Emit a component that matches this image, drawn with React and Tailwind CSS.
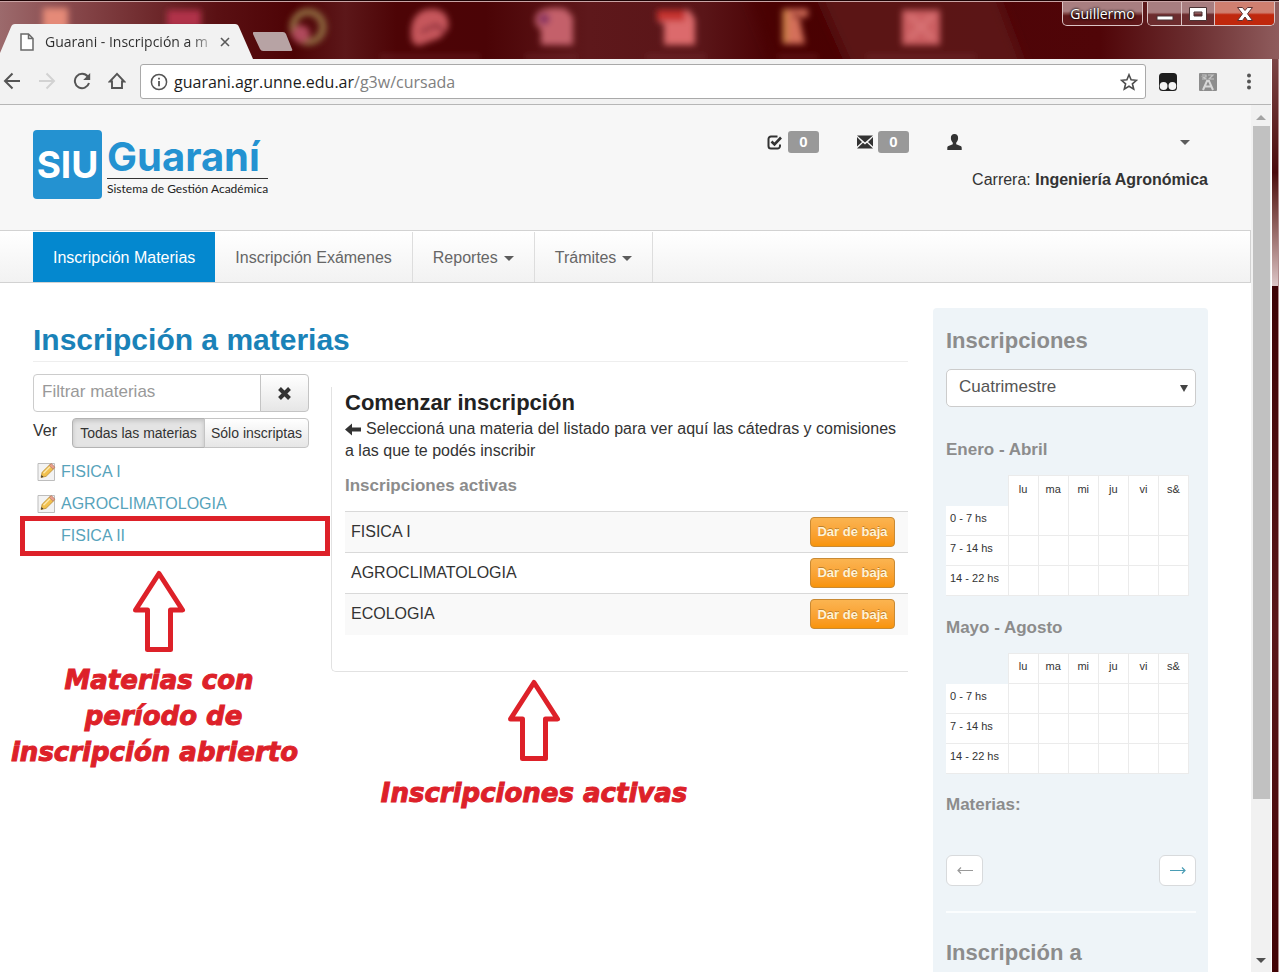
import React from "react";

const subjects = [
  { name: "FISICA I", enrolled: true },
  { name: "AGROCLIMATOLOGIA", enrolled: true },
  { name: "FISICA II", enrolled: false, highlighted: true },
];
const active = ["FISICA I", "AGROCLIMATOLOGIA", "ECOLOGIA"];
const days = ["lu", "ma", "mi", "ju", "vi", "s&"];
const slots = ["0 - 7 hs", "7 - 14 hs", "14 - 22 hs"];

function DesktopBackdrop() {
  return (
    <svg className="absolute inset-0 h-full w-full" viewBox="0 0 1279 59" preserveAspectRatio="none" aria-hidden="true">
      <defs>
        <linearGradient id="wall" x1="0" x2="1" y1="0" y2="0">
          <stop offset="0" stopColor="#9c6a6c" />
          <stop offset="0.05" stopColor="#8a4b4e" />
          <stop offset="0.17" stopColor="#5a1013" />
          <stop offset="0.23" stopColor="#4d0305" />
          <stop offset="0.27" stopColor="#5c1719" />
          <stop offset="0.31" stopColor="#4d0406" />
          <stop offset="0.38" stopColor="#4b0406" />
          <stop offset="0.46" stopColor="#5e181b" />
          <stop offset="0.55" stopColor="#5a1518" />
          <stop offset="0.6" stopColor="#4b0305" />
          <stop offset="0.86" stopColor="#500508" />
          <stop offset="0.93" stopColor="#6a2c2e" />
          <stop offset="1" stopColor="#8f5c5d" />
        </linearGradient>
        <filter id="soft" x="-30%" y="-30%" width="160%" height="160%">
          <feGaussianBlur stdDeviation="3" />
        </filter>
        <filter id="wide" x="-30%" y="-30%" width="160%" height="160%">
          <feGaussianBlur stdDeviation="6" />
        </filter>
      </defs>
      <rect width="1279" height="59" fill="url(#wall)" />
      <g filter="url(#wide)">
        <path d="M815 -10h180l30 79H850z" fill="#5e1a1d" opacity="0.8" />
        <path d="M745 -10h72l35 79h-75z" fill="#490203" opacity="0.6" />
      </g>
      <g filter="url(#soft)">
        <rect x="43" y="8" width="25" height="22" fill="#e58a78" />
        <rect x="167" y="10" width="34" height="18" fill="#b0324a" />
        <circle cx="308" cy="27" r="15" fill="none" stroke="#8f6a40" strokeWidth="7" />
        <circle cx="301" cy="34" r="9" fill="#b04a5c" />
        <path d="M412 42c-4-20 4-33 20-33 13 0 18 9 16 20l-8 9-22 8z" fill="#c6565c" />
        <path d="M421 32l15-7 8 6" fill="none" stroke="#7c2030" strokeWidth="3" />
        <path d="M541 45V29c-8-3-8-16 1-19 8-3 18-2 24-1l7 8v28z" fill="#c4606a" />
        <circle cx="544" cy="19" r="6" fill="#8b3460" />
        <path d="M664 45V23h-5V10h30l6 9v26z" fill="#dc6b6c" />
        <rect x="657" y="10" width="28" height="11" fill="#c5302f" />
        <path d="M783 44V9h25v8h-9l6 27z" fill="#d4705a" />
        <path d="M785 9v34" stroke="#c98242" strokeWidth="5" />
        <path d="M793 15l10 3" stroke="#7b1c1a" strokeWidth="4" />
        <rect x="902" y="10" width="38" height="35" fill="#cc5e62" />
        <path d="M909 15l24 24m0-24l-24 24" stroke="#d97476" strokeWidth="4" />
        <path d="M380 57h100M525 57h52M646 57h60M778 57h40M866 57h110" stroke="#8a4446" strokeWidth="2" opacity="0.7" />
      </g>
      <path d="M0 .5h1279" stroke="#1d0304" />
      <path d="M0 1.5h1279" stroke="#c9a3a4" />
    </svg>
  );
}

function TitleBar() {
  return (
    <div className="relative flex h-[59px] shrink-0 items-end overflow-hidden font-['Open_Sans',sans-serif]">
      <DesktopBackdrop />
      <div className="relative flex h-[35px] w-[253px] items-center">
        <svg className="absolute inset-0 h-full w-full" viewBox="0 0 253 35" aria-hidden="true">
          <path d="M0 29 11 3q1-3 4-3h220q3 0 4 3l14 32H0z" fill="#f2f2f2" />
        </svg>
        <svg className="relative ml-5 h-[18px] w-[14px] shrink-0" viewBox="0 0 14 18" aria-hidden="true">
          <path d="M1 1h7.500l4.500 4.500V17H1zM8.500 1v4.500H13" fill="#fff" stroke="#6a6a6a" strokeWidth="1.500" />
        </svg>
        <span className="relative ml-[11px] w-[172px] bg-linear-to-r from-[#2d2d2d] from-85% to-transparent bg-clip-text text-sm whitespace-nowrap text-transparent">
          Guarani - Inscripción a m
        </span>
        <button type="button" aria-label="Cerrar pestaña" className="relative flex size-4 items-center justify-center">
          <svg className="size-[10px]" viewBox="0 0 10 10" aria-hidden="true">
            <path d="M1 1l8 8m0-8L1 9" stroke="#5a5a5a" strokeWidth="1.600" />
          </svg>
        </button>
      </div>
      <button type="button" aria-label="Nueva pestaña" className="relative h-[27px] w-[40px]">
        <svg className="h-[27px] w-[40px]" viewBox="0 0 40 27" aria-hidden="true">
          <path d="M1 0h29q2 0 3 2l6 15q1 2-1 2H10q-2 0-3-2L0 2q-1-2 1-2z" fill="#b7a3a4" />
        </svg>
      </button>
      <div className="relative ml-auto flex gap-1 self-start pt-[2px] pr-1">
        <button type="button" className="h-6 w-[81px] rounded-b-[5px] border border-t-0 border-[#dcc4c5] bg-linear-to-b from-[#a87e80] from-40% to-[#5e1719] to-60% text-sm leading-5 text-white [text-shadow:0_0_3px_#000,0_0_2px_#000]">
          Guillermo
        </button>
        <div className="flex h-6 w-[128px] overflow-hidden rounded-b-[5px] border border-t-0 border-[#dcc4c5]">
          <button type="button" aria-label="Minimizar" className="flex w-[34px] items-center justify-center border-r border-[#dcc4c5] bg-linear-to-b from-[#a87e80] from-45% to-[#6c2c2e] to-55%">
            <svg className="h-5 w-5" viewBox="0 0 20 20" aria-hidden="true"><rect x="2" y="12" width="16" height="4" fill="#fff" stroke="#4a3334" /></svg>
          </button>
          <button type="button" aria-label="Maximizar" className="flex w-[33px] items-center justify-center border-r border-[#dcc4c5] bg-linear-to-b from-[#a87e80] from-45% to-[#6c2c2e] to-55%">
            <svg className="h-5 w-5" viewBox="0 0 20 20" aria-hidden="true"><path fillRule="evenodd" d="M1.500 3.500h17v13h-17zm4.500 4.500v4h8V8z" fill="#fff" stroke="#4a3334" /></svg>
          </button>
          <button type="button" aria-label="Cerrar" className="flex flex-1 items-center justify-center bg-linear-to-b from-[#cf7f70] from-45% to-[#c0280d] to-55%">
            <svg className="h-5 w-5" viewBox="0 0 20 20" aria-hidden="true"><path d="M2.500 3.500h5l2.500 3 2.500-3h5l-5 6.300 5 6.700h-5L10 13l-2.500 3.500h-5l5-6.700z" fill="#fff" stroke="#5c3030" /></svg>
          </button>
        </div>
      </div>
    </div>
  );
}

function Toolbar() {
  return (
    <div className="flex h-[46px] shrink-0 items-center border-b border-[#b6b6b6] bg-[#f2f2f2] pr-[13px]">
      <div className="flex items-center gap-[17px] pb-[2px] pl-[3px]">
        <button type="button" aria-label="Atrás">
          <svg className="size-[18px]" viewBox="0 0 18 18" aria-hidden="true"><path d="M17 9H2m7.500-7.500L2 9l7.500 7.500" fill="none" stroke="#555" strokeWidth="2" /></svg>
        </button>
        <button type="button" aria-label="Adelante">
          <svg className="size-[18px]" viewBox="0 0 18 18" aria-hidden="true"><path d="M1 9h15M8.500 1.500 16 9l-7.500 7.500" fill="none" stroke="#d2d2d2" strokeWidth="2" /></svg>
        </button>
        <button type="button" aria-label="Recargar">
          <svg className="size-[18px]" viewBox="0 0 18 18" aria-hidden="true">
            <path d="M14.800 4.600A7.200 7.200 0 1 0 16 11" fill="none" stroke="#555" strokeWidth="2" />
            <path d="M17.200 1v7H10.200z" fill="#555" />
          </svg>
        </button>
        <button type="button" aria-label="Inicio">
          <svg className="size-[18px]" viewBox="0 0 18 18" aria-hidden="true"><path d="M9 1.800 1.800 9.500H4V16h10V9.500h2.200z" fill="none" stroke="#555" strokeWidth="1.900" /></svg>
        </button>
      </div>
      <div className="ml-[14px] flex h-[35px] flex-1 items-center rounded-[3px] border border-[#a9a9a9] bg-white px-[9px]">
        <svg className="size-[18px] shrink-0" viewBox="0 0 18 18" aria-hidden="true">
          <circle cx="9" cy="9" r="7.600" fill="none" stroke="#555" strokeWidth="1.500" />
          <path d="M9 8v5.200M9 4.700v1.800" stroke="#555" strokeWidth="1.800" />
        </svg>
        <a href="#cursada" className="ml-[6px] font-['Open_Sans',sans-serif] text-base text-[#1c1c1c]">
          guarani.agr.unne.edu.ar<span className="text-[#808080]">/g3w/cursada</span>
        </a>
        <button type="button" aria-label="Marcador" className="-mr-[2px] ml-auto">
          <svg className="size-[18px]" viewBox="0 0 18 18" aria-hidden="true"><path d="M9 1.800l2.100 5 5.400.5-4.100 3.500 1.300 5.300L9 13.200l-4.700 2.900 1.300-5.300L1.500 7.300l5.400-.5z" fill="none" stroke="#4d4d4d" strokeWidth="1.600" /></svg>
        </button>
      </div>
      <div className="flex items-center pl-3">
        <button type="button" aria-label="Extensión 1">
          <svg className="size-5" viewBox="0 0 20 20" aria-hidden="true">
            <rect x="1" y="1" width="18" height="18" rx="3.500" fill="#1e1e1e" />
            <circle cx="5.600" cy="14" r="3.900" fill="#f4f4f4" /><circle cx="14.400" cy="14" r="3.900" fill="#f4f4f4" />
          </svg>
        </button>
        <button type="button" aria-label="Extensión 2" className="ml-5">
          <svg className="size-5" viewBox="0 0 20 20" aria-hidden="true">
            <rect x="1" y="1" width="18" height="18" rx="1" fill="#8d8d8d" />
            <path d="M4 3h4v2H5l3 2H4M10 3h5l-4 4h5" fill="none" stroke="#c4c4c4" strokeWidth="1.200" />
            <path d="M5 18l4-9h2l4 9M7 14.500h6" fill="none" stroke="#d8d8d8" strokeWidth="2" />
          </svg>
        </button>
        <button type="button" aria-label="Menú" className="ml-[22px]">
          <svg className="h-5 w-[18px]" viewBox="0 0 18 20" aria-hidden="true">
            <g fill="#555"><circle cx="9" cy="3.500" r="2" /><circle cx="9" cy="9.500" r="2" /><circle cx="9" cy="15.500" r="2" /></g>
          </svg>
        </button>
      </div>
    </div>
  );
}

function Caret() {
  return (
    <svg className="h-[5px] w-[10px]" viewBox="0 0 10 5" aria-hidden="true">
      <path d="M0 0h10L5 5z" fill="#5c5c5c" />
    </svg>
  );
}

function Badge({ children }) {
  return (
    <span className="flex h-[22px] w-[31px] items-center justify-center rounded-[3px] bg-[#999] text-[15px] font-bold text-white">
      {children}
    </span>
  );
}

function Logo() {
  return (
    <a href="#inicio" className="flex gap-[5px] font-['Inter',sans-serif]">
      <span className="flex size-[69px] items-center justify-center rounded-[4px] bg-[#2492d1] text-[37px] font-bold text-white">SIU</span>
      <span className="flex flex-col pt-[6px]">
        <span className="text-[40px] leading-[42px] font-bold text-[#2492d1]">Guaraní</span>
        <span className="border-t border-[#333] font-['Lato',sans-serif] text-xs leading-5 text-[#222]">Sistema de Gestión Académica</span>
      </span>
    </a>
  );
}

function PageHeader() {
  return (
    <header className="flex h-[125px] justify-between bg-[#f7f7f7] pt-[25px] pr-[43px] pl-[33px]">
      <Logo />
      <div className="flex flex-col items-end">
        <div className="flex h-6 items-center">
          <a href="#avisos" className="flex items-center gap-[6px]">
            <svg className="size-[15px]" viewBox="0 0 15 15" aria-hidden="true">
              <path d="M10.500 1.500H4A2.500 2.500 0 0 0 1.500 4v7A2.500 2.500 0 0 0 4 13.500h6.500A2.500 2.500 0 0 0 13 11V9.500" fill="none" stroke="#333" strokeWidth="2" />
              <path d="M4.500 6.500l3 3 6.500-7" fill="none" stroke="#333" strokeWidth="2.600" />
            </svg>
            <Badge>0</Badge>
          </a>
          <a href="#mensajes" className="ml-[38px] flex items-center gap-[5px]">
            <svg className="h-[14px] w-4" viewBox="0 0 16 14" aria-hidden="true">
              <path d="M0 .500h16L8 7.500zM0 2l5 5-5 4.500zM16 2v9.500L11 7zM0 13.500l6-5.700 2 1.700 2-1.700 6 5.700z" fill="#333" />
            </svg>
            <Badge>0</Badge>
          </a>
          <button type="button" aria-label="Usuario" className="mr-[18px] ml-[38px] flex w-[243px] items-center justify-between">
            <svg className="h-4 w-[15px]" viewBox="0 0 15 16" aria-hidden="true">
              <path d="M7.500 0C10 0 11.300 1.800 11.100 4.300c-.1 2-.9 3.500-1.900 4.400v1.500l4.300 1.700c.9.400 1.200 1 1.200 2V16H.3v-2.100c0-1 .3-1.600 1.200-2l4.300-1.700V8.700c-1-.9-1.800-2.400-1.900-4.400C3.700 1.800 5 0 7.500 0z" fill="#333" />
            </svg>
            <Caret />
          </button>
        </div>
        <p className="mt-[15px] leading-[22px]">
          Carrera: <strong>Ingeniería Agronómica</strong>
        </p>
      </div>
    </header>
  );
}

function MainNav() {
  const item = "flex items-center gap-[6px] border-r border-[#ddd] px-5 pt-[2px]";
  return (
    <nav className="flex h-[53px] border border-l-0 border-[#d2d2d2] bg-linear-to-b from-white to-[#f2f2f2] pt-px pl-[33px] text-[#666]">
      <a href="#materias" className="flex items-center bg-[#0488cf] px-5 pt-[2px] text-white">Inscripción Materias</a>
      <a href="#examenes" className={item}>Inscripción Exámenes</a>
      <button type="button" className={item}>Reportes <Caret /></button>
      <button type="button" className={item}>Trámites <Caret /></button>
    </nav>
  );
}

function NotePencil() {
  return (
    <svg className="h-5 w-[19px]" viewBox="0 0 19 20" aria-hidden="true">
      <path d="M1 1.500h16.500v17H1z" fill="#f3f3f3" stroke="#bdbdbd" />
      <path d="M4 15.500l1.200-5.300L13.500 2l4 4-8.400 8.300z" fill="#f2c14e" stroke="#b98a2e" strokeWidth=".8" />
      <path d="M12.300 3.500l3.700 3.700 2-2-3.700-3.700z" fill="#e9a08c" stroke="#a87262" strokeWidth=".6" />
      <path d="M4 15.500l.6-2.400 1.800 1.800z" fill="#333" />
      <path d="M6.500 11.300l6.500-6.500" stroke="#fbe7ae" strokeWidth="1.400" />
    </svg>
  );
}

function CalloutArrow() {
  return (
    <svg className="h-[82px] w-[54px]" viewBox="0 0 54 82" aria-hidden="true">
      <path d="M27 3.500 50.500 40H38.500V79.500H15.500V40H3.500z" fill="#fff" stroke="#dd2129" strokeWidth="5" strokeLinejoin="round" />
    </svg>
  );
}

const calloutText =
  "font-['DejaVu_Sans',sans-serif] text-[26px] leading-9 font-bold italic whitespace-pre text-[#dd2129] [-webkit-text-stroke:1px_#dd2129]";

function SubjectList() {
  return (
    <div className="relative w-[276px] shrink-0">
      <div className="flex h-[38px]">
        <input type="text" aria-label="Filtrar materias" placeholder="Filtrar materias" className="min-w-0 flex-1 rounded-l-[4px] border border-[#ccc] bg-white px-2 pb-[2px] text-[17px] placeholder:text-[#999]" />
        <button type="button" aria-label="Limpiar filtro" className="-ml-px flex w-[49px] items-center justify-center rounded-r-[4px] border border-[#c4c4c4] bg-linear-to-b from-white to-[#e6e6e6]">
          <svg className="size-[13px]" viewBox="0 0 13 13" aria-hidden="true"><path d="M1.500 1.500l10 10m0-10l-10 10" stroke="#333" strokeWidth="4" /></svg>
        </button>
      </div>
      <div className="mt-[6px] flex h-[30px]">
        <span className="w-[39px] shrink-0 leading-[26px]">Ver</span>
        <div className="flex h-full flex-1 text-sm whitespace-nowrap">
          <button type="button" className="flex-1 rounded-l-[4px] border border-[#b3b3b3] bg-[#e4e4e4] shadow-[inset_0_2px_4px_rgba(0,0,0,0.15)]">Todas las materias</button>
          <button type="button" className="-ml-px w-[105px] rounded-r-[4px] border border-[#c4c4c4] bg-linear-to-b from-white to-[#e6e6e6]">Sólo inscriptas</button>
        </div>
      </div>
      <ul className="mt-2">
        {subjects.map((s) => (
          <li key={s.name} className="relative flex h-8 items-center pl-1">
            <span className="mr-[5px] w-[19px]">{s.enrolled && <NotePencil />}</span>
            <a href="#materia" className="text-[#57a3bb]">{s.name}</a>
            {s.highlighted && <span className="pointer-events-none absolute -inset-y-1 -right-[21px] -left-[13px] border-[5px] border-[#dd2129]" />}
          </li>
        ))}
      </ul>
      <div className="absolute top-[196px] -left-[19px] flex w-[290px] flex-col items-center gap-[10px]">
        <CalloutArrow />
        <p className={calloutText + " text-center"}>{"Materias con\n período de\ninscripción abrierto "}</p>
      </div>
    </div>
  );
}

function EnrollmentPanel() {
  return (
    <section className="relative mt-[13px] ml-[22px] flex-1 rounded-bl-[5px] border-b border-l border-[#e2e2e2] pb-9 pl-[13px]">
      <h2 className="text-[22px] leading-[31px] font-bold text-[#222]">Comenzar inscripción</h2>
      <p className="leading-[22px]">
        <svg className="mr-[5px] inline h-[13px] w-4 align-[-2px]" viewBox="0 0 16 13" aria-hidden="true">
          <path d="M0 6.500 7 .500v4h9v4H7v4z" fill="#333" />
        </svg>
        Seleccioná una materia del listado para ver aquí las cátedras y comisiones a las que te podés inscribir
      </p>
      <h3 className="mt-3 text-[17px] leading-6 font-bold text-[#8c8c8c]">Inscripciones activas</h3>
      <table className="mt-[13px] w-full">
        <tbody>
          {active.map((name) => (
            <tr key={name} className="h-[41px] border-t border-[#d9d9d9] odd:bg-[#f9f9f9]">
              <td className="pl-[6px]">{name}</td>
              <td className="pr-[13px] text-right">
                <button type="button" className="h-[30px] w-[85px] rounded-[4px] border border-[#c98a34] bg-linear-to-b from-[#fbb450] to-[#f89406] align-middle text-[13px] font-bold text-[#fff3d6] [text-shadow:0_-1px_0_rgba(0,0,0,0.25)]">
                  Dar de baja
                </button>
              </td>
            </tr>
          ))}
        </tbody>
      </table>
      <div className="absolute top-full left-[42px] flex w-[320px] flex-col items-center gap-[14px] pt-2">
        <CalloutArrow />
        <p className={calloutText}>Inscripciones activas</p>
      </div>
    </section>
  );
}

function Schedule({ title, joined }) {
  return (
    <>
      <h3 className="text-[17px] leading-6 font-bold text-[#8c8c8c]">{title}</h3>
      <table className="mt-[13px] w-[243px] table-fixed border-collapse text-[11px]">
        <thead>
          <tr className="h-[30px]">
            <td className="w-[62px]" />
            {days.map((d) => (
              <th key={d} scope="col" className={"border border-[#ebebeb] bg-white pb-1 font-normal " + (joined ? "border-b-0" : "")}>{d}</th>
            ))}
          </tr>
        </thead>
        <tbody>
          {slots.map((s, i) => (
            <tr key={s} className="h-[30px]">
              <th scope="row" className="border-b border-[#ebebeb] bg-white pb-1 pl-1 text-left font-normal">{s}</th>
              {days.map((d) => (
                <td key={d} className={"border border-[#ebebeb] bg-white " + (joined && i === 0 ? "border-t-0" : "")} />
              ))}
            </tr>
          ))}
        </tbody>
      </table>
    </>
  );
}

function Sidebar() {
  const pager = "flex h-[31px] w-[37px] items-center justify-center rounded-[6px] border border-[#d8dadc] bg-white";
  return (
    <aside className="w-[275px] shrink-0 rounded-t-[4px] bg-[#eef4f8] pt-[17px] pr-3 pb-10 pl-[13px]">
      <h2 className="text-[22px] leading-8 font-bold text-[#8c8c8c]">Inscripciones</h2>
      <div className="relative mt-3 mb-[31px] h-[38px]">
        <select aria-label="Período" className="h-full w-full appearance-none rounded-[5px] border border-[#ccc] bg-white pb-[2px] pl-3 text-[17px] text-[#555]">
          <option>Cuatrimestre</option>
        </select>
        <svg className="pointer-events-none absolute top-4 right-2 h-[7px] w-2" viewBox="0 0 8 7" aria-hidden="true"><path d="M0 0h8L4 7z" fill="#444" /></svg>
      </div>
      <Schedule title="Enero - Abril" joined />
      <div className="h-5" />
      <Schedule title="Mayo - Agosto" />
      <h3 className="mt-[19px] text-[17px] leading-6 font-bold text-[#8c8c8c]">Materias:</h3>
      <div className="mt-[38px] flex justify-between">
        <button type="button" aria-label="Anterior" className={pager}>
          <svg className="h-[9px] w-4" viewBox="0 0 16 9" aria-hidden="true"><path d="M16 4.500H1M4 1.500 1 4.500 4 7.500" fill="none" stroke="#999" strokeWidth="1.200" /></svg>
        </button>
        <button type="button" aria-label="Siguiente" className={pager}>
          <svg className="h-[9px] w-4" viewBox="0 0 16 9" aria-hidden="true"><path d="M0 4.500h15M12 1.500 15 4.500 12 7.500" fill="none" stroke="#4a9db5" strokeWidth="1.200" /></svg>
        </button>
      </div>
      <hr className="mt-[25px] border-t-2 border-[#fbfdfe]" />
      <h2 className="mt-6 text-[22px] leading-8 font-bold text-[#8c8c8c]">Inscripción a</h2>
    </aside>
  );
}

function Scrollbar() {
  return (
    <div className="flex w-5 shrink-0 flex-col items-center bg-[#f1f1f1]" aria-hidden="true">
      <svg className="h-[21px] w-full" viewBox="0 0 20 21"><path d="M5 15h10l-5-5z" fill="#a3a3a3" /></svg>
      <div className="w-[17px] flex-[673] bg-[#c1c1c1]" />
      <div className="flex-[150]" />
      <svg className="h-[23px] w-full" viewBox="0 0 20 23"><path d="M5 9h10l-5 5z" fill="#505050" /></svg>
    </div>
  );
}

export default function App() {
  return (
    <div className="flex h-screen flex-col overflow-hidden bg-[#4a0608] font-['Liberation_Sans',sans-serif] text-base text-[#333]">
      <TitleBar />
      <div className="flex min-h-0 flex-1">
        <div className="flex min-w-0 flex-1 flex-col border-r border-white">
          <Toolbar />
          <div className="flex min-h-0 flex-1">
            <div className="min-w-0 flex-1 overflow-hidden bg-white">
              <PageHeader />
              <MainNav />
              <main className="flex gap-[25px] pt-[25px] pr-[43px] pl-[33px]">
                <div className="min-w-0 flex-1 pt-3">
                  <h1 className="border-b border-[#eee] pb-px text-[30px] leading-10 font-bold text-[#1a82b8]">Inscripción a materias</h1>
                  <div className="mt-3 flex items-start">
                    <SubjectList />
                    <EnrollmentPanel />
                  </div>
                </div>
                <Sidebar />
              </main>
            </div>
            <Scrollbar />
          </div>
        </div>
        <div className="flex w-[7px] shrink-0 flex-col border-r border-[#b08c8d]">
          <div className="h-[227px] bg-linear-to-b from-[#7c4546] via-[#4a0a0c] to-[#dcc6c7]" />
          <div className="flex-1 bg-linear-to-b from-[#3d0305] via-[#5a1719] to-[#420406]" />
        </div>
      </div>
    </div>
  );
}
